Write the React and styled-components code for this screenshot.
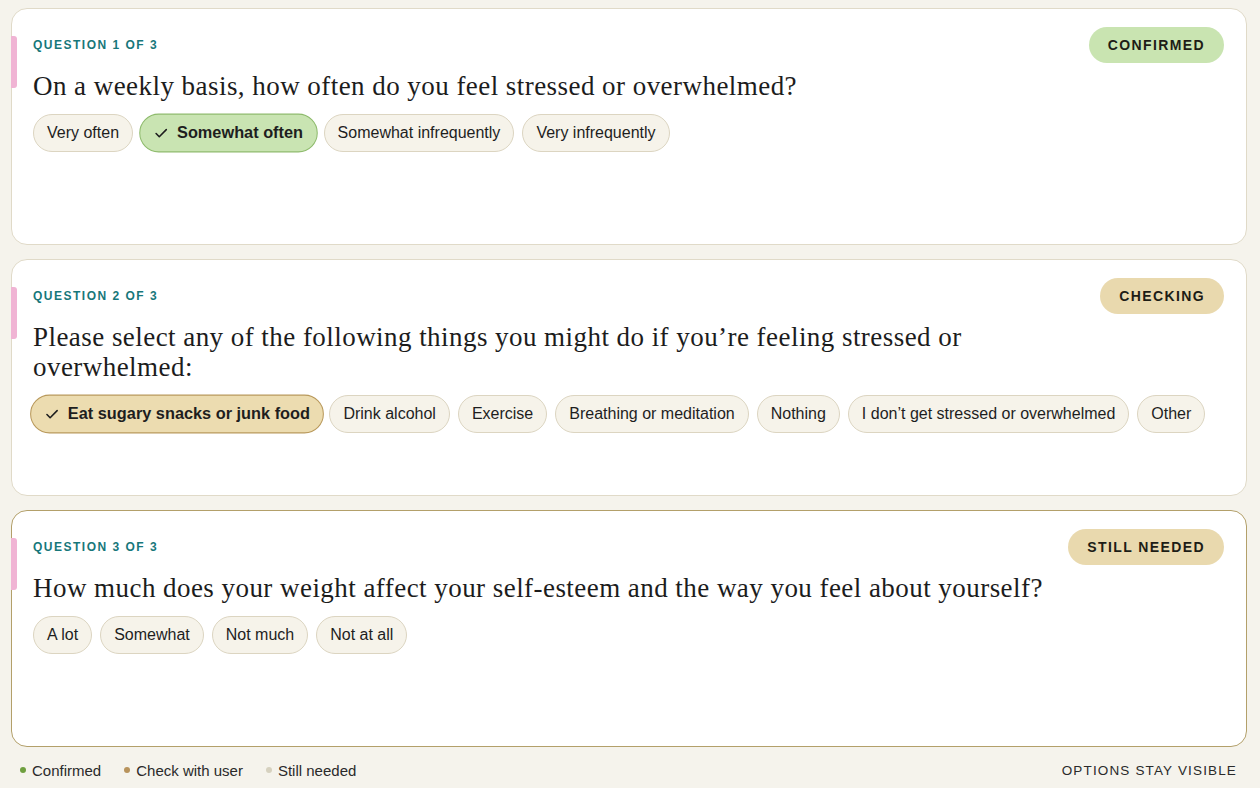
import styled, { createGlobalStyle } from "styled-components";
import { Check } from "lucide-react";

const GlobalStyle = createGlobalStyle`
  html, body {
    margin: 0;
    padding: 0;
    background: #f5f3ec;
  }
  body {
    font-family: "Liberation Sans", Arial, sans-serif;
    color: #1e1e1e;
  }
`;

const Page = styled.div`
  display: flex;
  flex-direction: column;
  gap: 14px;
  padding: 8px 13px 0 11px;
  min-height: 788px;
  box-sizing: border-box;
`;

const Card = styled.section`
  position: relative;
  background: #ffffff;
  border: 1px solid ${(p) => (p.$active ? "#b3a06a" : "#e0dac8")};
  border-radius: 16px;
  min-height: 237px;
  box-sizing: border-box;
  padding: 18px 22px 20px 21px;
`;

const Accent = styled.span`
  position: absolute;
  left: -1px;
  top: 27px;
  width: 6px;
  height: 52px;
  border-radius: 0 3px 3px 0;
  background: #f0b4d4;
`;

const Header = styled.div`
  display: flex;
  align-items: flex-start;
  gap: 24px;
`;

const Main = styled.div`
  flex: 1;
  min-width: 0;
`;

const Label = styled.div`
  font-size: 12px;
  font-weight: 700;
  letter-spacing: 1.5px;
  line-height: 37px;
  color: #17777a;
`;

const Question = styled.h2`
  margin: 7px 0 0;
  font-family: "Liberation Serif", Georgia, serif;
  font-weight: 400;
  font-size: 27px;
  letter-spacing: 0.45px;
  line-height: 30px;
  color: #1c1c1c;
`;

const Badge = styled.div`
  flex-shrink: 0;
  height: 36px;
  padding: 0 19px;
  border-radius: 18px;
  display: flex;
  align-items: center;
  font-size: 14px;
  font-weight: 700;
  letter-spacing: 1.4px;
  color: #1d1d16;
  background: ${(p) => (p.$tone === "green" ? "#c9e4b1" : "#e9d9ae")};
`;

const Options = styled.div`
  display: flex;
  flex-wrap: wrap;
  gap: 8px;
  margin-top: 13px;
`;

const chipColors = {
  green: { bg: "#c9e4b2", border: "#8dba6b" },
  gold: { bg: "#ecdcb0", border: "#b8985a" },
  none: { bg: "#f6f3ea", border: "#dcd5c1" },
};

const Chip = styled.button`
  display: inline-flex;
  align-items: center;
  gap: 8px;
  height: 38px;
  padding: 0 13px;
  border-radius: 19px;
  border: 1px solid ${(p) => chipColors[p.$tone].border};
  background: ${(p) => chipColors[p.$tone].bg};
  font-family: "Liberation Sans", Arial, sans-serif;
  font-size: 16px;
  font-weight: ${(p) => (p.$tone === "none" ? 400 : 700)};
  color: #1e1e1e;
  cursor: pointer;
  transform: scale(${(p) => (p.$tone === "none" ? 1 : 1.02)});
`;

const Footer = styled.footer`
  display: flex;
  align-items: center;
  justify-content: space-between;
  padding: 0 10px 0 9px;
  margin-top: -3px;
  height: 24px;
`;

const Legend = styled.div`
  display: flex;
  align-items: center;
  gap: 23px;
`;

const LegendItem = styled.span`
  display: inline-flex;
  align-items: center;
  gap: 6px;
  font-size: 15px;
  color: #2a2a2a;
`;

const Dot = styled.span`
  width: 6px;
  height: 6px;
  border-radius: 50%;
  background: ${(p) => p.$color};
`;

const Note = styled.span`
  font-size: 13.5px;
  letter-spacing: 1.15px;
  color: #2a2a2a;
`;

const questions = [
  {
    n: 1,
    text: "On a weekly basis, how often do you feel stressed or overwhelmed?",
    status: "CONFIRMED",
    tone: "green",
    options: ["Very often", "Somewhat often", "Somewhat infrequently", "Very infrequently"],
    picked: "Somewhat often",
  },
  {
    n: 2,
    text: "Please select any of the following things you might do if you\u2019re feeling stressed or overwhelmed:",
    status: "CHECKING",
    tone: "gold",
    options: [
      "Eat sugary snacks or junk food",
      "Drink alcohol",
      "Exercise",
      "Breathing or meditation",
      "Nothing",
      "I don\u2019t get stressed or overwhelmed",
      "Other",
    ],
    picked: "Eat sugary snacks or junk food",
  },
  {
    n: 3,
    text: "How much does your weight affect your self-esteem and the way you feel about yourself?",
    status: "STILL NEEDED",
    tone: "gold",
    options: ["A lot", "Somewhat", "Not much", "Not at all"],
    picked: null,
    active: true,
  },
];

const App = () => {
  return (
    <>
      <GlobalStyle />
      <Page>
        {questions.map((q) => (
          <Card key={q.n} $active={q.active}>
            <Accent />
            <Header>
              <Main>
                <Label>QUESTION {q.n} OF 3</Label>
                <Question>{q.text}</Question>
              </Main>
              <Badge $tone={q.tone}>{q.status}</Badge>
            </Header>
            <Options>
              {q.options.map((o) => {
                const on = o === q.picked;
                return (
                  <Chip key={o} $tone={on ? q.tone : "none"}>
                    {on && <Check size={15} strokeWidth={2.5} />}
                    {o}
                  </Chip>
                );
              })}
            </Options>
          </Card>
        ))}
        <Footer>
          <Legend>
            <LegendItem>
              <Dot $color="#6f9f3f" />
              Confirmed
            </LegendItem>
            <LegendItem>
              <Dot $color="#b8935c" />
              Check with user
            </LegendItem>
            <LegendItem>
              <Dot $color="#d6d1bf" />
              Still needed
            </LegendItem>
          </Legend>
          <Note>OPTIONS STAY VISIBLE</Note>
        </Footer>
      </Page>
    </>
  );
};

export default App;
